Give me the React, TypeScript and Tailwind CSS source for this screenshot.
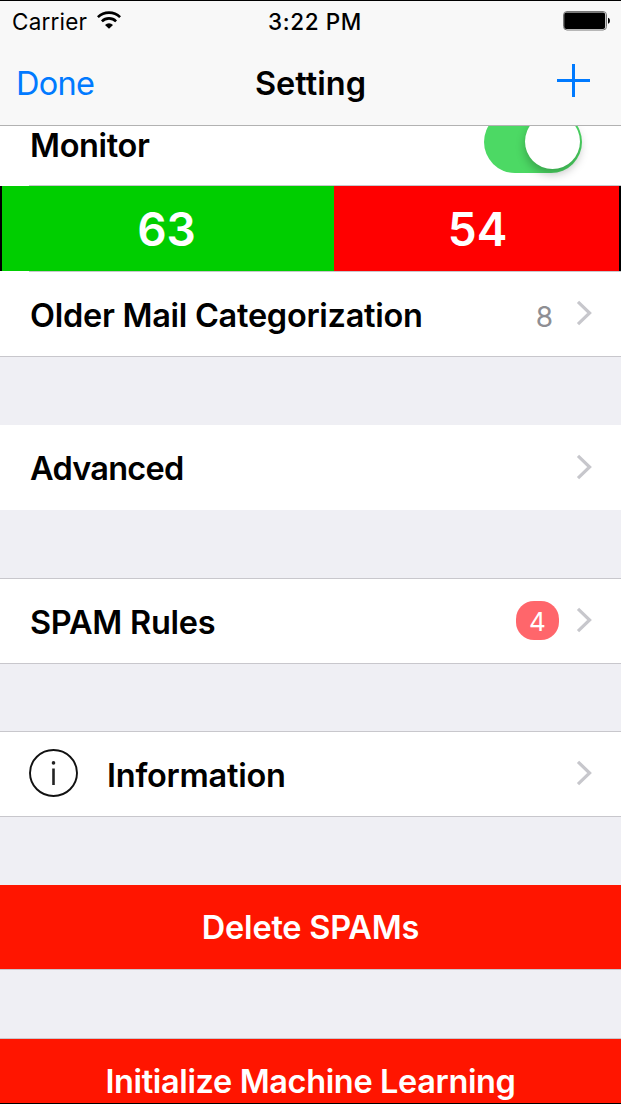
import React, { useState } from "react";
import clsx from "clsx";

interface RowProps {
  title: string;
  className?: string;
  titleClassName?: string;
  icon?: React.ReactNode;
  children?: React.ReactNode;
}

const WifiIcon = () => (
  <svg width="24" height="18" viewBox="0 0 24 18" fill="none" className="mb-[3px] shrink-0">
    <path d="M0.9 6.2a15.7 15.7 0 0 1 22.2 0" stroke="#000" strokeWidth="2.6" />
    <path d="M4.9 10.3a10.1 10.1 0 0 1 14.2 0" stroke="#000" strokeWidth="2.6" />
    <path d="M12 17.8 8 13.9a5.9 5.9 0 0 1 8 0z" fill="#000" />
  </svg>
);

const BatteryIcon = () => (
  <svg width="48" height="20" viewBox="0 0 48 20" className="mb-[2px] shrink-0">
    <rect x="0.5" y="0.5" width="43" height="18.5" rx="3.5" fill="#f8f8f8" stroke="#777" />
    <rect x="1.2" y="1.6" width="41" height="16.4" rx="2.2" fill="#000" />
    <path d="M45 6.8c2.6.6 2.6 5.4 0 6z" fill="#000" />
  </svg>
);

const Chevron = () => (
  <svg width="17" height="26" viewBox="0 0 17 26" fill="none" className="mb-[2px] shrink-0">
    <path d="M2 1.8 13.6 13 2 24.2" stroke="#c7c7cc" strokeWidth="3.2" />
  </svg>
);

const InfoIcon = () => (
  <svg width="49" height="48" viewBox="0 0 49 48" fill="none" className="mb-[2px] shrink-0">
    <ellipse cx="24.5" cy="24" rx="23.5" ry="23" stroke="#111" strokeWidth="1.9" />
    <circle cx="24.5" cy="13.9" r="1.8" fill="#222" />
    <path d="M24.5 19.5v16.5" stroke="#222" strokeWidth="2.6" />
  </svg>
);

const Row = ({ title, className, titleClassName = "tracking-[-0.27px]", icon, children }: RowProps) => (
  <div className={clsx("flex w-full shrink-0 items-center bg-white pr-[28px] pl-[29px]", className)}>
    {icon}
    <span className={clsx("grow pt-[4px] pl-px text-[32.5px] leading-none font-semibold whitespace-nowrap", titleClassName)}>
      {title}
    </span>
    {children}
  </div>
);

const App = () => {
  const [monitor, setMonitor] = useState(true);

  return (
    <div className="flex h-[1104px] w-[621px] flex-col overflow-hidden border-y border-black bg-[#efeff4] font-['Inter',sans-serif] text-black">
      <header className="flex h-[125px] shrink-0 flex-col border-b border-[#b2b2b2] bg-[#f8f8f8]">
        <div className="grid h-[40px] grid-cols-3 items-center pt-px pr-[10px] pl-[12px]">
          <div className="flex items-center gap-[10px]">
            <span className="pt-px text-[22.5px] leading-none tracking-[0.2px]">Carrier</span>
            <WifiIcon />
          </div>
          <span className="pt-px pl-[7px] text-center text-[22.5px] leading-none font-medium tracking-[0.6px] whitespace-nowrap">
            3:22 PM
          </span>
          <div className="flex justify-end">
            <BatteryIcon />
          </div>
        </div>
        <div className="grid h-[84px] grid-cols-3 items-center pr-[31px] pl-[15px]">
          <button className="pt-[2px] pl-px text-left text-[32.5px] leading-none tracking-[-0.7px] text-[#007aff]">Done</button>
          <h1 className="pt-[2px] pl-[16px] text-center text-[32.5px] leading-none font-semibold">Setting</h1>
          <button className="flex justify-end pb-[6px]" aria-label="Add rule">
            <svg width="33" height="33" viewBox="0 0 33 33">
              <path d="M16.5 0v33M0 16.5h33" stroke="#007aff" strokeWidth="3" />
            </svg>
          </button>
        </div>
      </header>

      {/* scrolled partly under the header, so the switch is cut at the top */}
      <Row title="Monitor" className="h-[59px]" titleClassName="self-start tracking-[-0.35px]">
        <div className="flex items-end self-stretch overflow-hidden pr-[11px] pb-[12px] pl-[10px]">
          <button
            role="switch"
            aria-checked={monitor}
            aria-label="Monitor"
            onClick={() => setMonitor(!monitor)}
            className={clsx(
              "flex h-[62px] w-[98px] shrink-0 items-center rounded-full px-[2px] pb-[2px]",
              monitor ? "justify-end bg-[#4cd964]" : "justify-start bg-[#e5e5ea]"
            )}
          >
            <span className="size-[55px] rounded-full bg-white shadow-[0_5px_10px_rgba(0,0,0,0.25)]"></span>
          </button>
        </div>
      </Row>
      <div className="shrink-0 bg-white pl-[29px]">
        <div className="h-px bg-[#c8c7cc]"></div>
      </div>

      <div className="flex h-[85px] shrink-0 border-r-2 border-l-2 border-black text-[46px] leading-none font-semibold text-white">
        <div className="flex w-[332px] items-center justify-center bg-[#00ce00] pr-[3px]">63</div>
        <div className="flex grow items-center justify-center bg-[#ff0000] pl-[2px]">54</div>
      </div>

      <div className="shrink-0 bg-white pl-[29px]">
        <div className="h-px bg-[#c8c7cc]"></div>
      </div>
      <Row title="Older Mail Categorization" className="h-[85px] border-b border-[#c8c7cc]">
        <span className="mt-[5px] mr-[23px] text-[28px] leading-none text-[#8e8e93]">8</span>
        <Chevron />
      </Row>

      <Row title="Advanced" className="mt-[68px] h-[85px]" titleClassName="tracking-[-0.75px]">
        <Chevron />
      </Row>

      <Row title="SPAM Rules" className="mt-[68px] h-[86px] border-y border-[#c8c7cc]">
        <span className="mr-[17px] mb-px flex h-[39px] w-[43px] items-center justify-center rounded-[18px] bg-[#ff666b] pt-[2px] text-[26px] leading-none text-white">
          4
        </span>
        <Chevron />
      </Row>

      <Row
        title="Information"
        className="mt-[67px] h-[86px] border-y border-[#c8c7cc]"
        titleClassName="ml-[28px] tracking-[-0.25px]"
        icon={<InfoIcon />}
      >
        <Chevron />
      </Row>

      <button className="mt-[68px] h-[85px] w-full shrink-0 border-b border-[#c8c7cc] bg-[#ff1500] pt-[3px] text-[32.5px] leading-none font-semibold tracking-[-0.22px] text-white">
        Delete SPAMs
      </button>

      <button className="mt-[68px] h-[85px] w-full shrink-0 border-t border-[#c8c7cc] bg-[#ff1500] pt-[2px] text-[32.5px] leading-none font-semibold tracking-[-0.36px] whitespace-nowrap text-white">
        Initialize Machine Learning
      </button>
    </div>
  );
};

export default App;
